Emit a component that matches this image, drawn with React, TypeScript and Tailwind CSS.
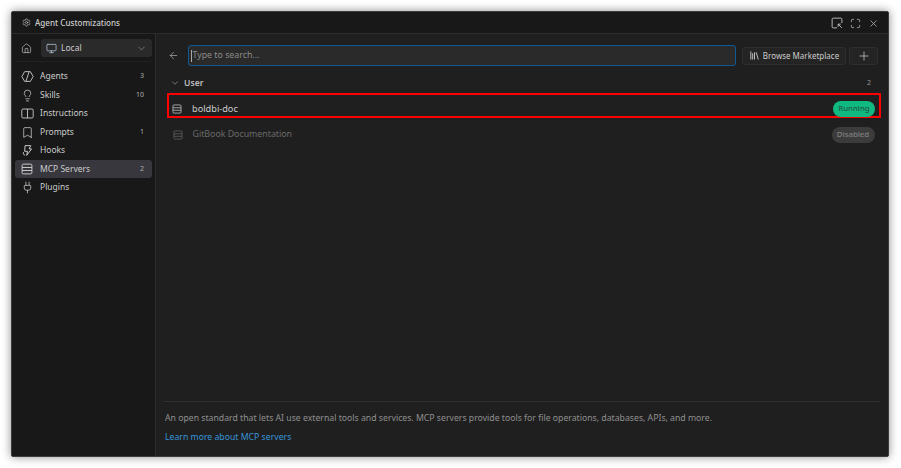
import { ArrowLeft, Bookmark, ChevronDown, House, Library, Lightbulb, Maximize, Monitor, Plug, Plus, Settings, X } from "lucide-react";
import type { ReactNode } from "react";

function ServerIcon({ className }: { className?: string }) {
  return (
    <svg viewBox="0 0 16 16" fill="none" stroke="currentColor" strokeWidth="1.3" className={className}>
      <rect x="1.5" y="1.5" width="13" height="13" rx="1.5" />
      <path d="M1.5 6h13M1.5 10h13" />
    </svg>
  );
}

function AgentIcon() {
  return (
    <svg viewBox="0 0 16 16" fill="none" stroke="currentColor" strokeWidth="1.1" className="size-[13px]">
      <path d="M4.5 2h7L15 8l-3.5 6h-7L1 8z" strokeLinejoin="round" />
      <path d="M10 2 6 14" />
    </svg>
  );
}

function HookIcon() {
  return (
    <svg viewBox="0 0 16 16" fill="none" stroke="currentColor" strokeWidth="1.2" className="size-[13px]">
      <path d="M5 2h7l-2 4h3l-6 8 1-5H4.5z" strokeLinejoin="round" />
      <path d="M3 10c-.5 2 .5 3.5 2 4" />
    </svg>
  );
}

function BookIcon() {
  return (
    <svg viewBox="0 0 16 16" fill="none" stroke="currentColor" strokeWidth="1.1" className="size-[13px]">
      <rect x="1" y="2.5" width="14" height="11" rx="1.5" />
      <path d="M8 2.5v11" />
    </svg>
  );
}

function PopOutIcon() {
  return (
    <svg viewBox="0 0 16 16" fill="none" stroke="currentColor" strokeWidth="1.2" className="size-[12px]">
      <path d="M14.5 8V3A1.5 1.5 0 0 0 13 1.5H3A1.5 1.5 0 0 0 1.5 3v10A1.5 1.5 0 0 0 3 14.5h5" />
      <path d="M14.5 14.5 9.5 9.5M9.5 13V9.5H13" />
    </svg>
  );
}

const navItems: { label: string; icon: ReactNode; count?: string; active?: boolean }[] = [
  { label: "Agents", icon: <AgentIcon />, count: "3" },
  { label: "Skills", icon: <Lightbulb className="size-[13px]" strokeWidth={1.4} />, count: "10" },
  { label: "Instructions", icon: <BookIcon /> },
  { label: "Prompts", icon: <Bookmark className="size-[13px]" strokeWidth={1.4} />, count: "1" },
  { label: "Hooks", icon: <HookIcon /> },
  { label: "MCP Servers", icon: <ServerIcon className="size-[12px]" />, count: "2", active: true },
  { label: "Plugins", icon: <Plug className="size-[13px]" strokeWidth={1.4} /> },
];

export default function App() {
  return (
    <div className="h-[468px] w-[901px] overflow-hidden bg-white pl-[11px] pt-[11px] font-['Noto_Sans','Open_Sans',sans-serif]">
      <div className="flex h-[446px] w-[878px] flex-col rounded-[2px] border border-[#3c3c3c] bg-[#1f1f1f] text-[#cccccc] shadow-[0_0_10px_rgba(0,0,0,0.45)]">
        <div className="flex h-[22px] shrink-0 items-center justify-between border-b border-[#2b2b2b] bg-[#181818] pl-[10px] pr-[9px] pt-[1px]">
          <div className="flex items-center gap-[4px]">
            <Settings className="size-[9px]" strokeWidth={1.6} />
            <span className="text-[8.1px] font-medium">Agent Customizations</span>
          </div>
          <div className="flex items-center gap-[7px] text-[#c5c5c5]">
            <PopOutIcon />
            <Maximize className="size-[11px]" strokeWidth={1.6} />
            <X className="size-[11px]" strokeWidth={1.5} />
          </div>
        </div>

        <div className="flex min-h-0 flex-1">
          <aside className="flex w-[144px] shrink-0 flex-col border-r border-[#2b2b2b] bg-[#181818] px-[3px] pt-[5px]">
            <div className="flex items-center gap-[9px] border-b border-[#222222] pb-[4px]">
              <House className="ml-[6px] size-[11px]" strokeWidth={1.4} />
              <div className="flex h-[18px] w-[111px] items-center rounded-[3px] bg-[#2a2a2b] pl-[5px] pr-[5px]">
                <Monitor className="size-[11px] text-[#b9cde0]" strokeWidth={1.6} />
                <span className="ml-[4px] text-[8.5px]">Local</span>
                <ChevronDown className="ml-auto size-[11px] text-[#999999]" strokeWidth={1.4} />
              </div>
            </div>
            <nav className="mt-[5.5px] flex flex-col gap-[0.5px]">
              {navItems.map((item) => (
                <div
                  key={item.label}
                  className={`flex h-[18px] items-center rounded-[3px] pl-[6px] pr-[8px] ${item.active ? "bg-[#37373d]" : ""}`}
                >
                  <span className="flex w-[19px] shrink-0 justify-start">{item.icon}</span>
                  <span className="text-[8.5px]">{item.label}</span>
                  {item.count && <span className="ml-auto text-[7px] text-[#b0b0b0]">{item.count}</span>}
                </div>
              ))}
            </nav>
          </aside>

          <main className="flex min-w-0 flex-1 flex-col">
            <div className="flex items-center pl-[12px] pr-[10px] pt-[11px]">
              <ArrowLeft className="size-[11px] shrink-0 text-[#bbbbbb]" strokeWidth={1.4} />
              <div className="ml-[9px] flex h-[21px] w-[548px] shrink-0 items-center rounded-[3px] border border-[#0f5a94] bg-[#2a2a2a] pl-[1.5px] text-[8.8px] text-[#8a8a8a]">
                <span className="mr-px h-[12px] w-px bg-[#aaaaaa]" />
                Type to search...
              </div>
              <div className="ml-[6px] flex h-[18px] w-[104px] shrink-0 items-center justify-center gap-[3px] rounded-[3px] border border-[#2e2e2e] bg-[#242424] text-[8px]">
                <Library className="size-[11px]" strokeWidth={2} />
                Browse Marketplace
              </div>
              <div className="ml-[3px] flex h-[18px] w-[29px] shrink-0 items-center justify-center rounded-[3px] border border-[#2e2e2e] bg-[#242424]">
                <Plus className="size-[14px]" strokeWidth={1.3} />
              </div>
            </div>

            <div className="flex items-center pl-[14px] pr-[17px] pt-[10.5px]">
              <ChevronDown className="size-[10px] text-[#aaaaaa]" strokeWidth={1.5} />
              <span className="ml-[4px] text-[8.6px] font-semibold text-[#bdbdbd]">User</span>
              <span className="ml-auto text-[7px] text-[#999999]">2</span>
            </div>

            <div className="ml-[11px] mr-[7px] mt-[4px] flex h-[25px] items-center border-[2.5px] border-[#ff0000] pl-[3px] pr-[4px] pt-[6px]">
              <ServerIcon className="size-[10px] text-[#bbbbbb]" />
              <span className="ml-[10px] text-[9.2px] text-[#cccccc]">boldbi-doc</span>
              <span className="ml-auto flex h-[16px] w-[42px] shrink-0 items-center justify-center rounded-full bg-[#10b981] text-[7.8px] font-medium text-[#1f5a44]">Running</span>
            </div>

            <div className="ml-[11px] mr-[7px] mt-[4px] flex h-[25px] items-center pl-[5.5px] pr-[6.5px]">
              <ServerIcon className="size-[10px] text-[#5f5f5f]" />
              <span className="ml-[10px] text-[8.8px] text-[#6a6a6a]">GitBook Documentation</span>
              <span className="ml-auto flex h-[16px] w-[43px] shrink-0 items-center justify-center rounded-full bg-[#3c3c3c] text-[7.8px] font-medium text-[#808080]">Disabled</span>
            </div>

            <div className="ml-[7px] mr-[8px] mt-auto flex h-[55px] flex-col gap-[5.5px] border-t border-[#2e2e2e] pl-[2px] pt-[10px] text-[8.7px]">
              <p className="text-[#8f8f8f]">An open standard that lets AI use external tools and services. MCP servers provide tools for file operations, databases, APIs, and more.</p>
              <a className="text-[#3794d8]">Learn more about MCP servers</a>
            </div>
          </main>
        </div>
      </div>
    </div>
  );
}
